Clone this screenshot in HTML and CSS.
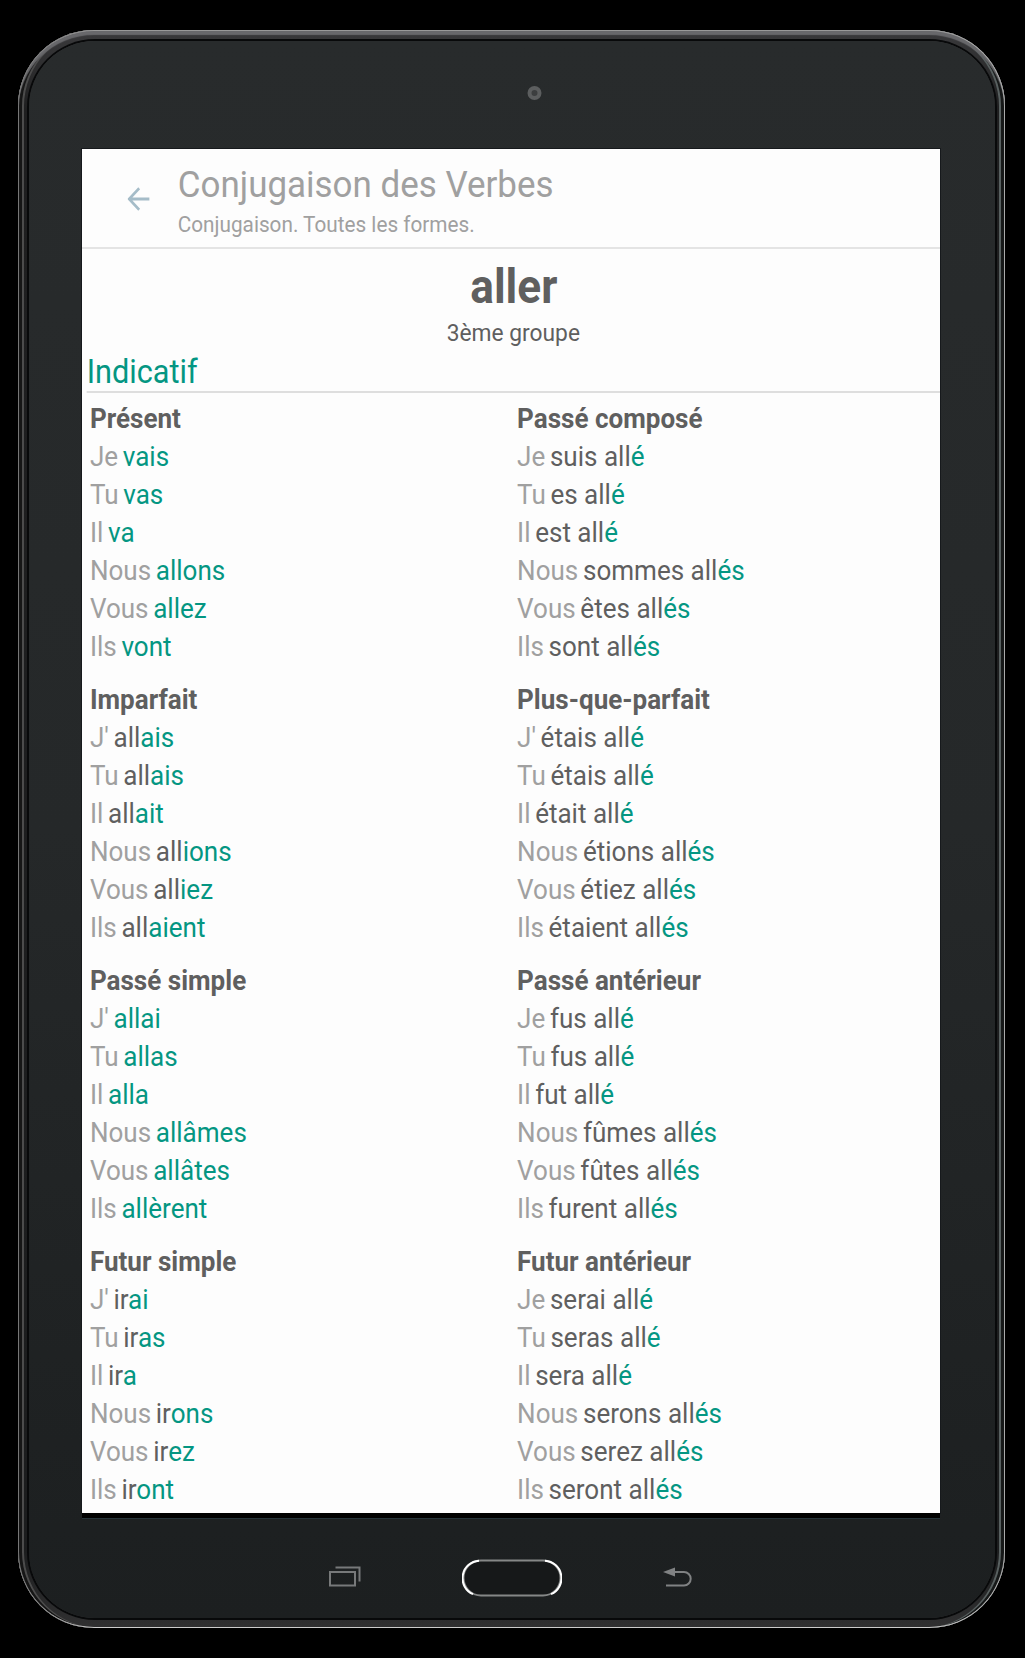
FILE: index.html
```html
<!DOCTYPE html>
<html lang="fr">
<head>
    <meta charset="UTF-8">
    <meta name="viewport" content="width=device-width, initial-scale=1.0">
    <title>Conjugaison des Verbes</title>
    <link rel="stylesheet" href="styles.css">
</head>
<body>
    <div class="tablet">
        <div class="face">
            <div class="bezel-top">
                <span class="camera"></span>
            </div>

            <div class="screen">
                <div class="content">
                    <header class="app-bar">
                        <svg class="back" viewBox="0 0 24 24" preserveAspectRatio="none">
                            <path d="M23.5 12H2M12.5 1.2L1.7 12l10.8 10.8" fill="none" stroke="#a5bcc8" stroke-width="2.8"/>
                        </svg>
                        <div>
                            <h1>Conjugaison des Verbes</h1>
                            <p class="subtitle">Conjugaison. Toutes les formes.</p>
                        </div>
                    </header>

                    <h2 class="verb">aller</h2>
                    <p class="group">3ème groupe</p>
                    <h3 class="mood">Indicatif</h3>

                    <div class="tenses">
                        <section>
                            <h4>Présent</h4>
                            <p><i>Je</i><b>vais</b></p>
                            <p><i>Tu</i><b>vas</b></p>
                            <p><i>Il</i><b>va</b></p>
                            <p><i>Nous</i><b>allons</b></p>
                            <p><i>Vous</i><b>allez</b></p>
                            <p><i>Ils</i><b>vont</b></p>
                        </section>
                        <section>
                            <h4>Passé composé</h4>
                            <p><i>Je</i>suis all<b>é</b></p>
                            <p><i>Tu</i>es all<b>é</b></p>
                            <p><i>Il</i>est all<b>é</b></p>
                            <p><i>Nous</i>sommes all<b>és</b></p>
                            <p><i>Vous</i>êtes all<b>és</b></p>
                            <p><i>Ils</i>sont all<b>és</b></p>
                        </section>
                        <section>
                            <h4>Imparfait</h4>
                            <p><i>J'</i>all<b>ais</b></p>
                            <p><i>Tu</i>all<b>ais</b></p>
                            <p><i>Il</i>all<b>ait</b></p>
                            <p><i>Nous</i>all<b>ions</b></p>
                            <p><i>Vous</i>all<b>iez</b></p>
                            <p><i>Ils</i>all<b>aient</b></p>
                        </section>
                        <section>
                            <h4>Plus-que-parfait</h4>
                            <p><i>J'</i>étais all<b>é</b></p>
                            <p><i>Tu</i>étais all<b>é</b></p>
                            <p><i>Il</i>était all<b>é</b></p>
                            <p><i>Nous</i>étions all<b>és</b></p>
                            <p><i>Vous</i>étiez all<b>és</b></p>
                            <p><i>Ils</i>étaient all<b>és</b></p>
                        </section>
                        <section>
                            <h4>Passé simple</h4>
                            <p><i>J'</i><b>allai</b></p>
                            <p><i>Tu</i><b>allas</b></p>
                            <p><i>Il</i><b>alla</b></p>
                            <p><i>Nous</i><b>allâmes</b></p>
                            <p><i>Vous</i><b>allâtes</b></p>
                            <p><i>Ils</i><b>allèrent</b></p>
                        </section>
                        <section>
                            <h4>Passé antérieur</h4>
                            <p><i>Je</i>fus all<b>é</b></p>
                            <p><i>Tu</i>fus all<b>é</b></p>
                            <p><i>Il</i>fut all<b>é</b></p>
                            <p><i>Nous</i>fûmes all<b>és</b></p>
                            <p><i>Vous</i>fûtes all<b>és</b></p>
                            <p><i>Ils</i>furent all<b>és</b></p>
                        </section>
                        <section>
                            <h4>Futur simple</h4>
                            <p><i>J'</i>ir<b>ai</b></p>
                            <p><i>Tu</i>ir<b>as</b></p>
                            <p><i>Il</i>ir<b>a</b></p>
                            <p><i>Nous</i>ir<b>ons</b></p>
                            <p><i>Vous</i>ir<b>ez</b></p>
                            <p><i>Ils</i>ir<b>ont</b></p>
                        </section>
                        <section>
                            <h4>Futur antérieur</h4>
                            <p><i>Je</i>serai all<b>é</b></p>
                            <p><i>Tu</i>seras all<b>é</b></p>
                            <p><i>Il</i>sera all<b>é</b></p>
                            <p><i>Nous</i>serons all<b>és</b></p>
                            <p><i>Vous</i>serez all<b>és</b></p>
                            <p><i>Ils</i>seront all<b>és</b></p>
                        </section>
                    </div>
                </div>
            </div>

            <div class="bezel-bottom">
                <svg class="recent" width="32" height="21" viewBox="0 0 32 21" fill="none" stroke="#77797a" stroke-width="2">
                    <path d="M1 6h25v13.5H1z"/>
                    <path d="M6.5 1.5h24v14"/>
                </svg>
                <svg class="home" width="100" height="38" viewBox="0 0 100 38">
                    <rect x="1.5" y="1.5" width="97" height="35" rx="17.5" fill="#161819" stroke="#858787" stroke-width="2"/>
                    <path d="M17 1.700A17.500 17.500 0 0 0 11 35.200M83 1.700A17.500 17.500 0 0 1 89 35.200" fill="none" stroke="#fff" stroke-width="2"/>
                </svg>
                <svg class="return" width="30" height="20" viewBox="0 0 30 20">
                    <path d="M10 5h11a6.700 6.700 0 0 1 0 13.400H3" fill="none" stroke="#808283" stroke-width="2"/>
                    <path d="M0 5L12 .5v9z" fill="#808283"/>
                </svg>
            </div>
        </div>
    </div>
</body>
</html>
```
FILE: styles.css
```css
* {
    box-sizing: border-box;
    margin: 0;
    padding: 0;
}
body {
    background-color: #000;
    font-family: Roboto, sans-serif;
    color: #5f5f5f;
    padding: 30px 20px 0 18px;
    height: 1658px;
    overflow: hidden;
}
.tablet {
    height: 1598px;
    padding: 11px 10px 10px 11px;
    border-radius: 76px;
    background: linear-gradient(#3a3a3c, #1f1f20 5%, #1c1d1e 95%, #303031);
    box-shadow: inset 1px 0 #777, inset -1px 0 #aaa, inset 0 1px #999, inset 0 -1px #ccc, inset 0 5px 1px #68686b, inset 4px 0 #161616, inset 6px 0 #4c4c4c, inset -4px 0 #161818, inset -6px 0 #586060;
}
.face {
    height: 1577px;
    border-radius: 66px;
    background: linear-gradient(#282b2c, #252829 50%, #1c1f20);
    box-shadow: 0 0 0 2px #08090a;
    padding: 0 55px 0 53px;
}
.bezel-top {
    height: 108px;
    padding-top: 45px;
}
.camera {
    display: block;
    width: 14px;
    height: 14px;
    margin: 0 auto;
    transform: translateX(23.5px);
    border-radius: 50%;
    background-color: #3c3e3f;
    border: 4px solid #5c5e5f;
}
.screen {
    height: 1364px;
    background-color: #fdfdfd;
    box-shadow: 0 0 0 1px #16191c;
    overflow: hidden;
}
/* text on the display is slightly condensed */
.content {
    width: 107.53%;
    transform: scaleX(0.93);
    transform-origin: 0 0;
}
.app-bar {
    display: flex;
    height: 100px;
    border-bottom: 2px solid #e4e4e4;
    color: #a0a0a0;
}
.back {
    width: 24px;
    height: 24px;
    margin: 38px 30px 0 49px;
}
h1 {
    font-size: 37.6px;
    font-weight: 400;
    line-height: 44px;
    margin-top: 13px;
}
.subtitle {
    font-size: 22.3px;
    line-height: 26px;
    margin-top: 5px;
}
.verb {
    font-size: 47.5px;
    line-height: 54px;
    text-align: center;
    margin-top: 11px;
    padding-left: 6px;
}
.group {
    font-size: 24.5px;
    line-height: 28px;
    text-align: center;
    margin-top: 5px;
    padding-left: 5px;
}
.mood {
    font-size: 33px;
    font-weight: 400;
    line-height: 38px;
    color: #049682;
    margin: 6px 0 0 5px;
    height: 40px;
    border-bottom: 2px solid #dedede;
}
.tenses {
    display: grid;
    grid-template-columns: 459.3px 1fr;
    row-gap: 15px;
    padding: 7px 0 0 8.5px;
    font-size: 28px;
    line-height: 38px;
}
.tenses h4 {
    font-size: 28px;
}
.tenses i {
    font-style: normal;
    color: #a0a0a0;
    margin-right: 5px;
}
.tenses b {
    font-weight: 400;
    color: #049682;
}
.bezel-bottom {
    display: flex;
    align-items: flex-start;
    height: 105px;
    padding: 41px 0 0 247px;
    border-top: 5px solid #000;
    box-shadow: inset 0 1px #26343a;
}
.recent {
    margin-top: 7px;
}
.home {
    margin-left: 101px;
}
.return {
    margin: 8px 0 0 101px;
}
```
